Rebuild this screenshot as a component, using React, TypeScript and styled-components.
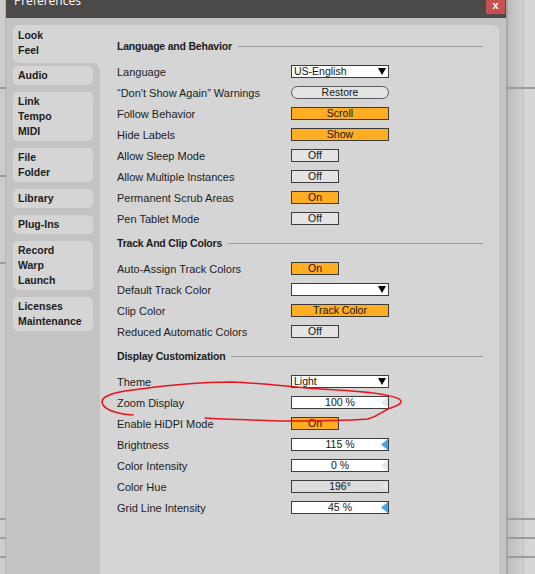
import React from "react";
import styled, { createGlobalStyle } from "styled-components";

const GlobalStyle = createGlobalStyle`
  html, body {
    margin: 0;
    padding: 0;
  }
  body {
    width: 535px;
    height: 574px;
    overflow: hidden;
    background: #d2d2d2;
    font-family: "Liberation Sans", Arial, sans-serif;
  }
`;

const line = (y: number) =>
  `linear-gradient(#9c9c9c, #9c9c9c) 0 ${y}px / 100% 2px no-repeat`;

const Screen = styled.div`
  position: relative;
  display: flex;
  width: 535px;
  height: 574px;
  overflow: hidden;
`;

const LeftStrip = styled.div`
  width: 6px;
  flex-shrink: 0;
  background: ${[87, 175, 262, 518, 537, 556].map(line).join(", ")},
    linear-gradient(90deg, #cccccc 0 5px, #b4b4b4 5px 6px);
`;

const RightStrip = styled.div`
  flex: 1;
  background: ${[87, 518, 537, 556].map(line).join(", ")},
    linear-gradient(
      90deg,
      #a6a6a6 0 2px,
      #bcbcbc 2px,
      #d0d0d0 17px,
      #c2c2c2 17px 18px,
      #d6d6d6 18px
    );
`;

const Window = styled.div`
  width: 500px;
  flex-shrink: 0;
  display: flex;
  flex-direction: column;
`;

const TitleBar = styled.div`
  height: 18px;
  background: #4b4a48;
  display: flex;
  justify-content: space-between;
  align-items: flex-start;
  padding-left: 8px;
  overflow: hidden;
`;

const Title = styled.span`
  color: #ffffff;
  font-family: "Open Sans", "Noto Sans", sans-serif;
  font-size: 12px;
  line-height: 12px;
  margin-top: -5px;
`;

const CloseButton = styled.div`
  width: 19px;
  height: 14px;
  margin-right: 1px;
  background: #c75050;
  color: #ffffff;
  font-weight: bold;
  font-size: 11px;
  line-height: 10px;
  display: flex;
  justify-content: center;
`;

const WindowBody = styled.div`
  flex: 1;
  background: #c3c3c3;
  display: grid;
  grid-template-columns: 87px 1fr;
  padding: 7px 7px 0 7px;
`;

const Sidebar = styled.div`
  display: flex;
  flex-direction: column;
  gap: 7px;
`;

const TabBase = styled.div`
  background: #d5d5d5;
  color: #1c1c1c;
  font-weight: bold;
  font-size: 10.5px;
  line-height: 15px;
`;

const ActiveTab = styled(TabBase)`
  position: relative;
  padding: 3px 5px 5px;
  border-radius: 6px 0 0 6px;
  margin-bottom: -4px;

  &::after {
    content: "";
    position: absolute;
    right: 0;
    top: 100%;
    width: 7px;
    height: 7px;
    background: radial-gradient(
      circle at 0 100%,
      transparent 6.5px,
      #d5d5d5 7px
    );
  }
`;

const Tab = styled(TabBase)`
  width: 80px;
  box-sizing: border-box;
  padding: 2px 5px;
  border-radius: 5px;
`;

const Panel = styled.div`
  background: #d5d5d5;
  border-top-right-radius: 6px;
  padding: 11px 16px 0 17px;
`;

const SectionHeader = styled.div<{ $first?: boolean }>`
  display: flex;
  align-items: center;
  gap: 6px;
  height: 20px;
  margin-top: ${({ $first }) => ($first ? 0 : 4)}px;
  margin-bottom: 5px;
  color: #1c1c1c;
  font-weight: bold;
  font-size: 10.5px;
  letter-spacing: -0.2px;

  &::after {
    content: "";
    flex: 1;
    height: 1px;
    background: #9a9a9a;
  }
`;

const Row = styled.div`
  display: grid;
  grid-template-columns: 174px auto;
  align-items: center;
  height: 21px;
`;

const Label = styled.span`
  color: #1c1c1c;
  font-size: 11px;
`;

const ControlBox = styled.div<{ $narrow?: boolean }>`
  box-sizing: border-box;
  width: ${({ $narrow }) => ($narrow ? 48 : 98)}px;
  height: 13px;
  border: 1px solid #3c3c3c;
  font-size: 10.5px;
  line-height: 11px;
  color: #141414;
  display: flex;
  align-items: center;
`;

const Dropdown = styled(ControlBox)`
  background: #ffffff;
  justify-content: space-between;
  padding: 0 2px 0 2px;
`;

const PillButton = styled(ControlBox)`
  background: #e4e4e4;
  border-color: #5a5a5a;
  border-radius: 7px;
  justify-content: center;
`;

const Toggle = styled(ControlBox)<{ $on?: boolean }>`
  background: ${({ $on }) => ($on ? "#ffad22" : "#e4e4e4")};
  justify-content: center;
`;

const ValueField = styled(ControlBox)<{ $disabled?: boolean }>`
  position: relative;
  background: ${({ $disabled }) => ($disabled ? "#dcdcdc" : "#ffffff")};
  justify-content: center;

  svg {
    position: absolute;
    right: 0;
    top: 0;
  }
`;

const DownArrow = () => (
  <svg width="8" height="7" viewBox="0 0 8 7">
    <polygon points="0,0 8,0 4,7" fill="#000" />
  </svg>
);

const SliderArrow = ({ color }: { color: string }) => (
  <svg width="7" height="11" viewBox="0 0 7 11">
    <polygon points="7,0 7,11 0,5.5" fill={color} />
  </svg>
);

const Annotation = styled.svg`
  position: absolute;
  left: 0;
  top: 0;
  pointer-events: none;
`;

type Control =
  | { kind: "dropdown"; value: string }
  | { kind: "pill"; value: string }
  | { kind: "toggle"; value: string; on?: boolean; wide?: boolean }
  | { kind: "value"; value: string; arrow: "blue" | "gray"; disabled?: boolean };

interface Setting {
  label: string;
  control: Control;
}

interface Section {
  title: string;
  rows: Setting[];
}

const sections: Section[] = [
  {
    title: "Language and Behavior",
    rows: [
      { label: "Language", control: { kind: "dropdown", value: "US-English" } },
      { label: "\u201cDon't Show Again\u201d Warnings", control: { kind: "pill", value: "Restore" } },
      { label: "Follow Behavior", control: { kind: "toggle", value: "Scroll", on: true, wide: true } },
      { label: "Hide Labels", control: { kind: "toggle", value: "Show", on: true, wide: true } },
      { label: "Allow Sleep Mode", control: { kind: "toggle", value: "Off" } },
      { label: "Allow Multiple Instances", control: { kind: "toggle", value: "Off" } },
      { label: "Permanent Scrub Areas", control: { kind: "toggle", value: "On", on: true } },
      { label: "Pen Tablet Mode", control: { kind: "toggle", value: "Off" } },
    ],
  },
  {
    title: "Track And Clip Colors",
    rows: [
      { label: "Auto-Assign Track Colors", control: { kind: "toggle", value: "On", on: true } },
      { label: "Default Track Color", control: { kind: "dropdown", value: "" } },
      { label: "Clip Color", control: { kind: "toggle", value: "Track Color", on: true, wide: true } },
      { label: "Reduced Automatic Colors", control: { kind: "toggle", value: "Off" } },
    ],
  },
  {
    title: "Display Customization",
    rows: [
      { label: "Theme", control: { kind: "dropdown", value: "Light" } },
      { label: "Zoom Display", control: { kind: "value", value: "100 %", arrow: "gray" } },
      { label: "Enable HiDPI Mode", control: { kind: "toggle", value: "On", on: true } },
      { label: "Brightness", control: { kind: "value", value: "115 %", arrow: "blue" } },
      { label: "Color Intensity", control: { kind: "value", value: "0 %", arrow: "gray" } },
      { label: "Color Hue", control: { kind: "value", value: "196\u00b0", arrow: "gray", disabled: true } },
      { label: "Grid Line Intensity", control: { kind: "value", value: "45 %", arrow: "blue" } },
    ],
  },
];

const tabs = [
  ["Audio"],
  ["Link", "Tempo", "MIDI"],
  ["File", "Folder"],
  ["Library"],
  ["Plug-Ins"],
  ["Record", "Warp", "Launch"],
  ["Licenses", "Maintenance"],
];

const renderControl = (c: Control) => {
  switch (c.kind) {
    case "dropdown":
      return (
        <Dropdown>
          <span>{c.value}</span>
          <DownArrow />
        </Dropdown>
      );
    case "pill":
      return <PillButton>{c.value}</PillButton>;
    case "toggle":
      return (
        <Toggle $on={c.on} $narrow={!c.wide}>
          {c.value}
        </Toggle>
      );
    case "value":
      return (
        <ValueField $disabled={c.disabled}>
          {c.value}
          <SliderArrow color={c.arrow === "blue" ? "#3fa6f0" : "#e6e6e6"} />
        </ValueField>
      );
  }
};

export default function App() {
  return (
    <>
      <GlobalStyle />
      <Screen>
        <LeftStrip />
        <Window>
          <TitleBar>
            <Title>Preferences</Title>
            <CloseButton>x</CloseButton>
          </TitleBar>
          <WindowBody>
            <Sidebar>
              <ActiveTab>
                Look
                <br />
                Feel
              </ActiveTab>
              {tabs.map((lines) => (
                <Tab key={lines[0]}>
                  {lines.map((l) => (
                    <div key={l}>{l}</div>
                  ))}
                </Tab>
              ))}
            </Sidebar>
            <Panel>
              {sections.map((s, i) => (
                <React.Fragment key={s.title}>
                  <SectionHeader $first={i === 0}>{s.title}</SectionHeader>
                  {s.rows.map((r) => (
                    <Row key={r.label}>
                      <Label>{r.label}</Label>
                      {renderControl(r.control)}
                    </Row>
                  ))}
                </React.Fragment>
              ))}
            </Panel>
          </WindowBody>
        </Window>
        <RightStrip />
        <Annotation width="535" height="574" viewBox="0 0 535 574">
          <path
            d="M 133 415 C 120 414, 108 412, 103 405 C 99 398, 108 394, 125 391 C 160 386, 200 382, 232 382 C 260 383, 290 387, 320 389 C 360 391, 398 394, 401 401 C 402 405, 393 407, 388 409 C 382 412, 378 416, 368 419 C 340 421, 300 421, 280 421 C 250 420, 220 419, 205 418"
            fill="none"
            stroke="#e8141c"
            strokeWidth="1.5"
            strokeLinecap="round"
          />
        </Annotation>
      </Screen>
    </>
  );
}
